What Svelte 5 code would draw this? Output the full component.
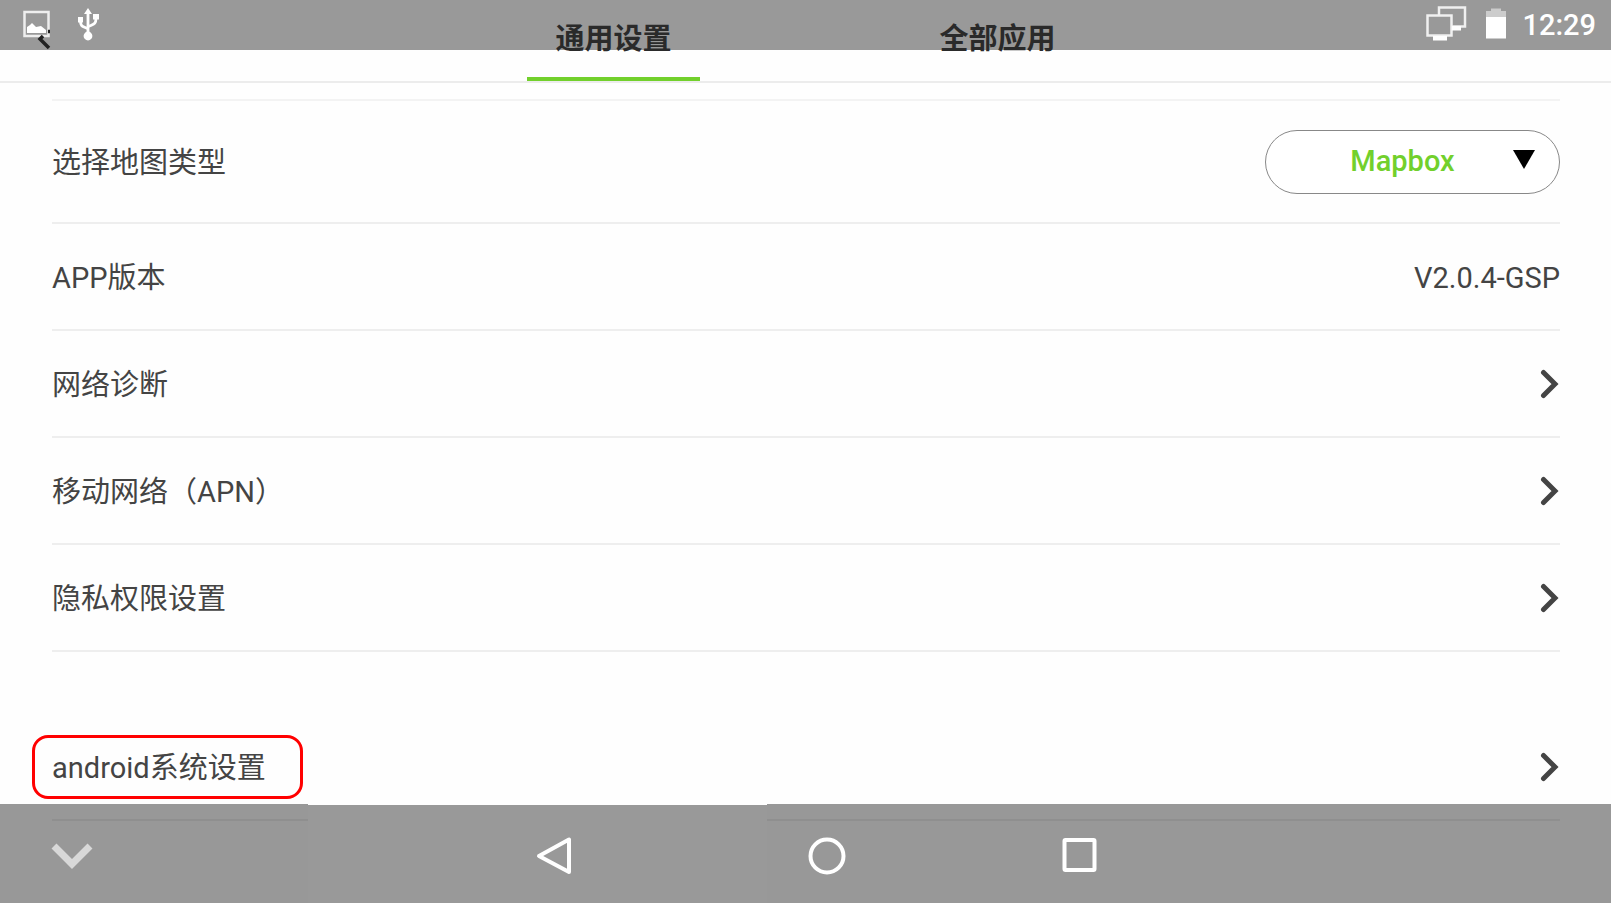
<script>
  let mapType = $state('Mapbox');
  const links = ['网络诊断', '移动网络（APN）', '隐私权限设置'];
  const tabs = ['通用设置', '全部应用'];
  let active = $state(0);
</script>

{#snippet chevron()}
  <svg class="chevron" viewBox="0 0 20 30" aria-hidden="true">
    <path d="M3.5 3.5 15 15 3.5 26.5" fill="none" stroke="#444" stroke-width="5" stroke-linecap="round" />
  </svg>
{/snippet}

<div class="screen">
  <header class="header">
    <div class="status">
      <svg class="left-icons" viewBox="0 0 80 50" aria-hidden="true">
        <rect x="1.5" y="12" width="24" height="24" fill="none" stroke="#eee" stroke-width="2.5" />
        <path d="M4 33V27L7 25 9 23 13 27 18 26 23 30V33Z" fill="#fff" />
        <g fill="none" stroke="#fff" stroke-width="2.8">
          <path d="M65 34V12M65 29C60 26 57.5 27 57.5 21M65 27C70 24 73 25 73 18" />
        </g>
        <path d="M65 8 69 14H61ZM55 17H60V22.500H55ZM70 14H76V19.500H70Z" fill="#fff" />
        <circle cx="65" cy="36" r="4.4" fill="#fff" />
      </svg>
      <div class="right-icons">
        <svg class="battery-set" viewBox="0 0 84 50" aria-hidden="true">
          <g fill="none" stroke="#f0f0f0" stroke-width="2.5">
            <path d="M15 15V7.500H41V26.500H28" />
            <rect x="3.500" y="15.500" width="24" height="20" />
          </g>
          <path d="M28 26H37V30.500H28ZM9 36H23V40.500H9Z" fill="#fff" />
          <path d="M62 11H67V8.500H77V11H82V18H62Z" fill="#ccc" />
          <path d="M62 17H82V38.500H62Z" fill="#fff" />
        </svg>
        <time>12:29</time>
      </div>
    </div>
    <button class="back" aria-label="返回">
      <svg viewBox="0 0 14 22" aria-hidden="true">
        <path d="M11 3.500H13M12 20 3 11 6 8" fill="none" stroke="#222" stroke-width="3.500" />
      </svg>
    </button>
    <nav class="tabs">
      {#each tabs as tab, i}
        <button class="tab" class:active={active === i} onclick={() => (active = i)}>{tab}</button>
      {/each}
    </nav>
  </header>

  <main class="settings">
    <div class="row tall">
      <label for="map-type">选择地图类型</label>
      <div class="picker">
        <select id="map-type" bind:value={mapType}>
          <option>Mapbox</option>
        </select>
        <svg class="caret" viewBox="0 0 22 19" aria-hidden="true"><path d="M0 0H22L11 19Z" /></svg>
      </div>
    </div>
    <div class="row">
      <span>APP版本</span>
      <span>V2.0.4-GSP</span>
    </div>
    {#each links as name}
      <button class="row">
        <span>{name}</span>
        {@render chevron()}
      </button>
    {/each}
    <button class="row system">
      <span class="marked">android系统设置</span>
      {@render chevron()}
    </button>
  </main>

  <footer class="navbar">
    <div class="patch"></div>
    <button class="hide" aria-label="隐藏">
      <svg viewBox="0 0 42 28" aria-hidden="true">
        <path d="M3 4 21 22 39 4" fill="none" stroke="#d8d8d8" stroke-width="7" />
      </svg>
    </button>
    <button aria-label="后退">
      <svg viewBox="0 0 42 42" aria-hidden="true">
        <path d="M36 4.500V37L6 21Z" fill="none" stroke="#fff" stroke-width="4" stroke-linejoin="round" />
      </svg>
    </button>
    <button aria-label="主屏幕">
      <svg viewBox="0 0 42 42" aria-hidden="true">
        <circle cx="21" cy="21" r="16.500" fill="none" stroke="#fff" stroke-width="4" />
      </svg>
    </button>
    <button aria-label="最近任务">
      <svg viewBox="0 0 42 42" aria-hidden="true">
        <rect x="5.500" y="5" width="30" height="30" rx="1" fill="none" stroke="#fff" stroke-width="4" />
      </svg>
    </button>
  </footer>
</div>

<style>
  :global(body) {
    margin: 0;
    background: #fff;
  }
  .screen {
    position: relative;
    min-height: 100vh;
    overflow: hidden;
    box-sizing: border-box;
    background: #fefefe;
    color: #444;
    font: 29px/40px Roboto, 'Noto Sans CJK SC', sans-serif;
  }
  button {
    border: 0;
    padding: 0;
    background: none;
    color: inherit;
    font: inherit;
    cursor: pointer;
  }
  svg {
    display: block;
  }
  .header {
    position: relative;
    height: 81px;
    border-bottom: 2px solid #ececec;
  }
  .status {
    position: absolute;
    inset: 0 0 auto;
    height: 50px;
    display: flex;
    justify-content: space-between;
    padding: 0 15px 0 23px;
    background: #999;
    color: #fff;
  }
  .left-icons {
    width: 80px;
    height: 50px;
  }
  .right-icons {
    display: flex;
    align-items: center;
    gap: 14px;
    font-weight: 500;
  }
  .battery-set {
    width: 84px;
    height: 50px;
  }
  .back {
    position: absolute;
    left: 37px;
    top: 28px;
  }
  .back svg {
    width: 14px;
    height: 22px;
  }
  .tabs {
    position: relative;
    width: max-content;
    height: 100%;
    margin: 0 auto;
    display: flex;
    gap: 211px;
  }
  .tab {
    width: 173px;
    box-sizing: border-box;
    border-bottom: 4px solid transparent;
    color: #2a2a2a;
    font-weight: 700;
  }
  .tab.active {
    border-color: #72d02c;
  }
  .settings {
    margin: 16px 51px 0 52px;
    border-top: 2px solid #f3f3f3;
  }
  .row {
    display: flex;
    align-items: center;
    justify-content: space-between;
    width: 100%;
    height: 107px;
    box-sizing: border-box;
    border-bottom: 2px solid #eee;
  }
  .row > span,
  .row > label {
    padding-top: 2px;
  }
  .tall {
    height: 123px;
  }
  .system {
    margin-top: 62px;
  }
  .picker {
    position: relative;
  }
  select {
    width: 295px;
    height: 64px;
    box-sizing: border-box;
    padding: 0 20px 2px 0;
    border: 1px solid #888;
    border-radius: 32px;
    appearance: none;
    background: #fff;
    color: #72d02c;
    font: inherit;
    font-weight: 500;
    text-align: center;
    text-align-last: center;
  }
  .caret {
    position: absolute;
    right: 25px;
    top: 20px;
    width: 22px;
    height: 19px;
    pointer-events: none;
  }
  .chevron {
    width: 20px;
    height: 30px;
  }
  .marked {
    position: relative;
  }
  .marked::after {
    content: '';
    position: absolute;
    inset: -11px -37px -11px -20px;
    border: 3px solid #f00;
    border-radius: 16px;
  }
  .navbar {
    position: absolute;
    inset: auto 0 0;
    height: 99px;
    box-sizing: border-box;
    padding-top: 4px;
    display: grid;
    grid-template-columns: 418fr 272fr 274fr 231fr 416fr;
    align-items: center;
    background: rgba(0, 0, 0, 0.4);
  }
  .navbar button {
    position: relative;
    justify-self: center;
  }
  .navbar .hide {
    justify-self: start;
    margin-left: 51px;
  }
  .navbar svg {
    width: 42px;
    height: 42px;
  }
  .navbar .hide svg {
    height: 28px;
  }
  .patch {
    position: absolute;
    inset: 0 52.4% 0 308px;
    border-top: 1px solid #fefefe;
    background: #999;
  }
</style>
